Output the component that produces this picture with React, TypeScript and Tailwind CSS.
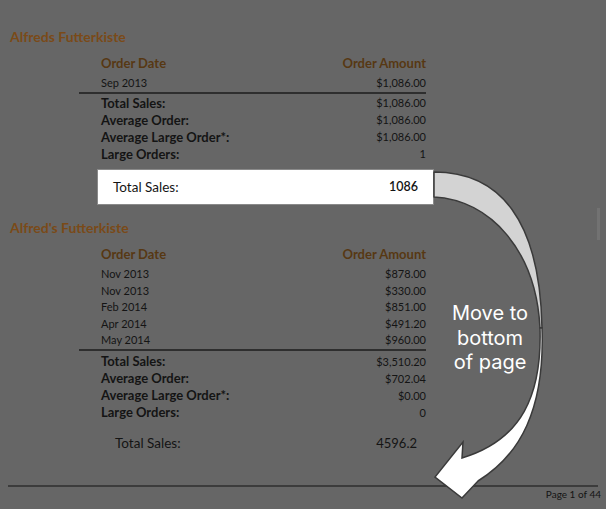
import React from 'react';

interface Summary {
  total: string;
  average: string;
  averageLarge: string;
  largeOrders: string;
}

interface Customer {
  name: string;
  orders: { date: string; amount: string }[];
  summary: Summary;
  boxTotal: string;
  highlighted: boolean;
}

const customers: Customer[] = [
  {
    name: 'Alfreds Futterkiste',
    orders: [{ date: 'Sep 2013', amount: '$1,086.00' }],
    summary: { total: '$1,086.00', average: '$1,086.00', averageLarge: '$1,086.00', largeOrders: '1' },
    boxTotal: '1086',
    highlighted: true,
  },
  {
    name: "Alfred's Futterkiste",
    orders: [
      { date: 'Nov 2013', amount: '$878.00' },
      { date: 'Nov 2013', amount: '$330.00' },
      { date: 'Feb 2014', amount: '$851.00' },
      { date: 'Apr 2014', amount: '$491.20' },
      { date: 'May 2014', amount: '$960.00' },
    ],
    summary: { total: '$3,510.20', average: '$702.04', averageLarge: '$0.00', largeOrders: '0' },
    boxTotal: '4596.2',
    highlighted: false,
  },
];

function CustomerGroup({ customer, first }: { customer: Customer; first: boolean }) {
  const summaryRows = [
    ['Total Sales:', customer.summary.total],
    ['Average Order:', customer.summary.average],
    ['Average Large Order*:', customer.summary.averageLarge],
    ['Large Orders:', customer.summary.largeOrders],
  ];

  return (
    <div className={first ? 'pt-[27px]' : 'pt-[13px]'}>
      <div className="h-[20px] px-[10px] text-[14px] font-bold leading-[20px] text-[#7a4a18]">
        {customer.name}
      </div>

      {/* orders table */}
      <div className="ml-[79px] mt-[7px] w-[347px]">
        <div className="flex h-[20px] items-center justify-between pl-[22px] text-[13px] font-bold text-[#573813]">
          <span>Order Date</span>
          <span>Order Amount</span>
        </div>
        <div className={first ? 'mt-[1px] border-b-2 border-[#2e2e2e]' : 'mt-[1px] border-b-2 border-[#2e2e2e]'}>
          {customer.orders.map((o, i) => (
            <div
              key={i}
              className={`flex items-center justify-between pl-[22px] text-[11px] text-[#141414] ${first ? 'h-[17px]' : 'h-[16.5px]'}`}
            >
              <span>{o.date}</span>
              <span>{o.amount}</span>
            </div>
          ))}
        </div>
        <div className={first ? 'mt-[1px]' : 'mt-[3px]'}>
          {summaryRows.map(([label, value]) => (
            <div key={label} className="flex h-[17px] items-center justify-between pl-[22px] text-[#141414]">
              <span className="text-[13px] font-bold">{label}</span>
              <span className="text-[11px]">{value}</span>
            </div>
          ))}
        </div>
      </div>

      {/* group total box */}
      <div
        className={`ml-[97px] flex h-[36px] w-[337px] items-center justify-between text-[13.5px] text-[#141414] ${
          first ? 'mt-[6px] border border-[#8a8a8a] bg-white pl-[15px] pr-[15px]' : 'mt-[4px] pl-[18px] pr-[17px]'
        }`}
      >
        <span>Total Sales:</span>
        <span className={first ? 'text-[12.5px] font-semibold' : 'text-[13px]'}>{customer.boxTotal}</span>
      </div>
    </div>
  );
}

export default function App() {
  return (
    <div
      className="relative h-[509px] w-[606px] overflow-hidden bg-[#666666]"
      style={{ fontFamily: 'Lato, "Noto Sans", sans-serif' }}
    >
      {customers.map((c, i) => (
        <CustomerGroup key={c.name} customer={c} first={i === 0} />
      ))}

      {/* page footer */}
      <div className="mx-[8px] mt-[23px] border-t-2 border-[#3c3c3c]" />
      <div className="flex h-[14px] items-center justify-end pr-[5px] pt-[1px] text-[10px] text-[#141414]">
        Page 1 of 44
      </div>

      {/* faint scrollbar */}
      <div className="absolute left-[597px] top-[208px] h-[32px] w-[3px] bg-[#727272]" />

      {/* callout arrow */}
      <svg className="pointer-events-none absolute left-0 top-0" width="606" height="509" viewBox="0 0 606 509">
        <path
          d="M434,172 C500,172 540,220 542,328 L540,328 C536,250 490,200 434,197 Z"
          fill="#d3d3d3"
          stroke="#3a3a3a"
          strokeWidth="1.5"
          strokeLinejoin="round"
        />
        <path
          d="M540,328 C542,395 522,440 462,458 L463,442 L435,477 L462,498 L478,481 C520,455 545,410 542,328 Z"
          fill="#ffffff"
          stroke="#3a3a3a"
          strokeWidth="1.5"
          strokeLinejoin="miter"
        />
      </svg>

      {/* callout text */}
      <div
        className="absolute left-[440px] top-[301px] w-[100px] text-center text-[20px] leading-[24.5px] text-white"
        style={{ fontFamily: 'Inter, "Noto Sans", sans-serif' }}
      >
        Move to
        <br />
        bottom
        <br />
        of page
      </div>
    </div>
  );
}
